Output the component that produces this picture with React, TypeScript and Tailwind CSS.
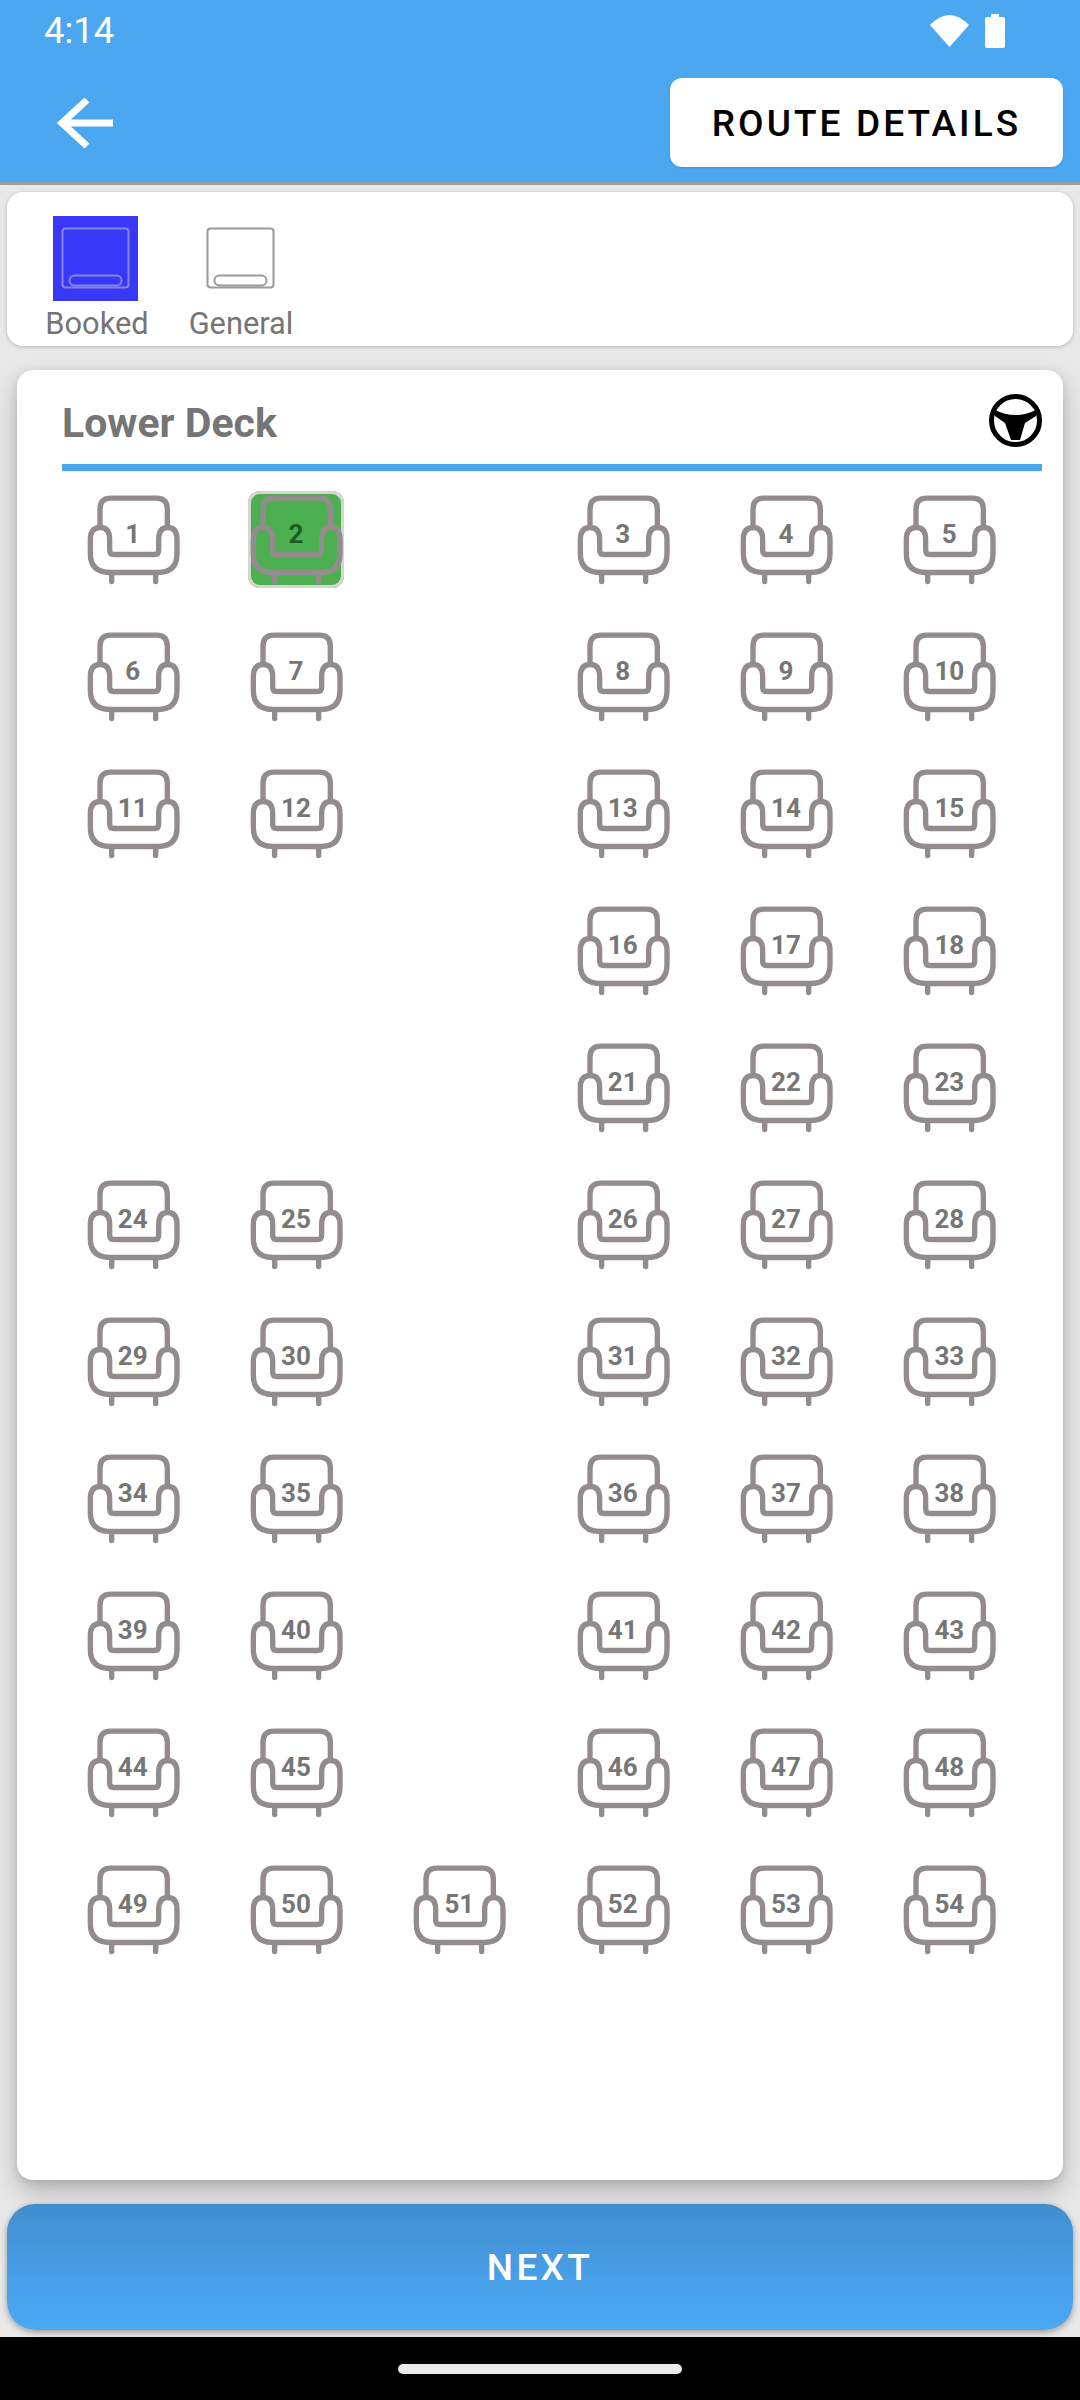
import React from 'react';

const rows: (number | null)[][] = [
  [1, 2, null, 3, 4, 5],
  [6, 7, null, 8, 9, 10],
  [11, 12, null, 13, 14, 15],
  [null, null, null, 16, 17, 18],
  [null, null, null, 21, 22, 23],
  [24, 25, null, 26, 27, 28],
  [29, 30, null, 31, 32, 33],
  [34, 35, null, 36, 37, 38],
  [39, 40, null, 41, 42, 43],
  [44, 45, null, 46, 47, 48],
  [49, 50, 51, 52, 53, 54],
];

const Chair: React.FC = () => (
  <svg viewBox="74 63 288 290" className="w-full h-full" fill="none" stroke="#938c8c" strokeWidth="16" strokeLinecap="round" strokeLinejoin="round">
    <path d="M119 165V117Q119 84 152 84H288Q321 84 321 117V165" />
    <path d="M90 208Q90 172 120 172Q148 172 148 208V240Q148 253 161 253H282Q295 253 295 240V208Q295 172 322 172Q350 172 350 208V250Q350 307 293 307H150Q90 307 90 250Z" />
    <path d="M154 312V334M286 312V334" />
  </svg>
);

const Seat: React.FC<{ n: number }> = ({ n }) => {
  const selected = n === 2;
  return (
    <div className={`relative w-[96px] h-[97px] rounded-[12px] overflow-hidden ${selected ? 'bg-[#4caf50] shadow-[inset_0_0_0_3px_#d6d6d0]' : ''}`}>
      <Chair />
      <span className={`absolute left-0 right-0 top-[25px] text-center text-[26px] leading-[36px] font-bold ${selected ? 'text-[#1c5e20]' : 'text-[#767676]'}`}>
        {n}
      </span>
    </div>
  );
};

const LegendSeat: React.FC<{ stroke: string }> = ({ stroke }) => (
  <svg viewBox="0 0 85 85" className="w-full h-full" fill="none" stroke={stroke} strokeWidth="2">
    <rect x="9.5" y="12.5" width="66" height="59" rx="3" />
    <rect x="16.5" y="59.5" width="52" height="10" rx="5" />
  </svg>
);

export default function App() {
  return (
    <div className="w-[1080px] h-[2400px] flex flex-col overflow-hidden bg-[#e8e8e8] font-[Roboto,sans-serif]">
      {/* Status bar + toolbar */}
      <header className="h-[185px] shrink-0 bg-[#4ca7f1] border-b-[3px] border-[#9b9c9d] relative">
        <div className="flex items-center justify-between h-[62px] pl-[44px] pr-[75px]">
          <span className="text-[36.5px] leading-[62px] text-white">4:14</span>
          <div className="flex items-center gap-[16px]">
            <svg width="39" height="32" viewBox="0 0 39 32" fill="white">
              <path d="M19.5 32L0 10Q19.5 -10 39 10Z" />
            </svg>
            <svg width="20" height="34" viewBox="0 0 20 34" fill="white">
              <path d="M6 0H14V3H18Q20 3 20 5V32Q20 34 18 34H2Q0 34 0 32V5Q0 3 2 3H6Z" />
            </svg>
          </div>
        </div>
        <div className="flex items-center justify-between mt-[16px] pl-[57px] pr-[17px]">
          <svg width="56" height="50" viewBox="0 0 56 50" fill="none" stroke="white" strokeWidth="7">
            <path d="M56 25H6M30 2L5 25L30 48" />
          </svg>
          <button className="w-[393px] h-[89px] pt-[2px] bg-white rounded-[12px] text-[37px] font-medium tracking-[3.1px] text-black shadow-sm">
            ROUTE DETAILS
          </button>
        </div>
      </header>

      {/* Legend */}
      <section className="mx-[7px] mt-[7px] h-[154px] shrink-0 bg-white rounded-[16px] shadow-[0_1px_4px_rgba(0,0,0,0.2)] flex gap-[42px] pl-[39px] pt-[24px]">
        <div className="flex flex-col items-center w-[102px]">
          <div className="w-[85px] h-[85px] mr-[3px] bg-[#3838f8]">
            <LegendSeat stroke="#8585d8" />
          </div>
          <span className="mt-[5px] text-[30.8px] leading-[36px] text-[#757575]">Booked</span>
        </div>
        <div className="flex flex-col items-center w-[102px]">
          <div className="w-[85px] h-[85px] mr-[2px]">
            <LegendSeat stroke="#9a9a9a" />
          </div>
          <span className="mt-[5px] text-[30.8px] leading-[36px] text-[#757575]">General</span>
        </div>
      </section>

      {/* Deck */}
      <section className="ml-[17px] mr-[17px] mt-[24px] h-[1810px] shrink-0 bg-white rounded-[16px] shadow-[0_12px_24px_rgba(0,0,0,0.22),0_2px_10px_rgba(0,0,0,0.1)] pt-[24px] relative z-10">
        <div className="flex items-center justify-between ml-[45px] mr-[21px] h-[53px]">
          <span className="text-[41px] font-bold text-[#757575] mt-[7px]">Lower Deck</span>
          <svg width="53" height="53" viewBox="0 0 53 53">
            <circle cx="26.5" cy="26.5" r="24" fill="none" stroke="black" strokeWidth="5" />
            <path d="M6 16Q16 21 26.5 21Q37 21 47 16V22L36 29L31 46H22L16 29L6 22Z" fill="black" />
          </svg>
        </div>
        <div className="ml-[45px] mr-[21px] mt-[17px] h-[7px] bg-[#4ca7f1]" />
        <div className="ml-[34px] w-[980px] pt-[20px] grid grid-cols-6 gap-y-[40px]">
          {rows.flat().map((n, idx) => (
            <div key={idx} className="h-[97px] flex justify-center">
              {n !== null && <Seat n={n} />}
            </div>
          ))}
        </div>
      </section>

      {/* Next */}
      <button className="mx-[7px] mt-[24px] h-[126px] pt-[2px] shrink-0 rounded-[28px] bg-gradient-to-b from-[#408dce] via-[#48a0e8] via-60% to-[#4ba8f3] text-white text-[37px] font-medium tracking-[3.3px] shadow-[0_2px_6px_rgba(0,0,0,0.35)] relative z-20">
        NEXT
      </button>

      {/* Nav bar */}
      <div className="mt-[7px] flex-1 bg-black flex justify-center pt-[27px]">
        <div className="w-[284px] h-[10px] rounded-full bg-[#eaeaea]" />
      </div>
    </div>
  );
}
